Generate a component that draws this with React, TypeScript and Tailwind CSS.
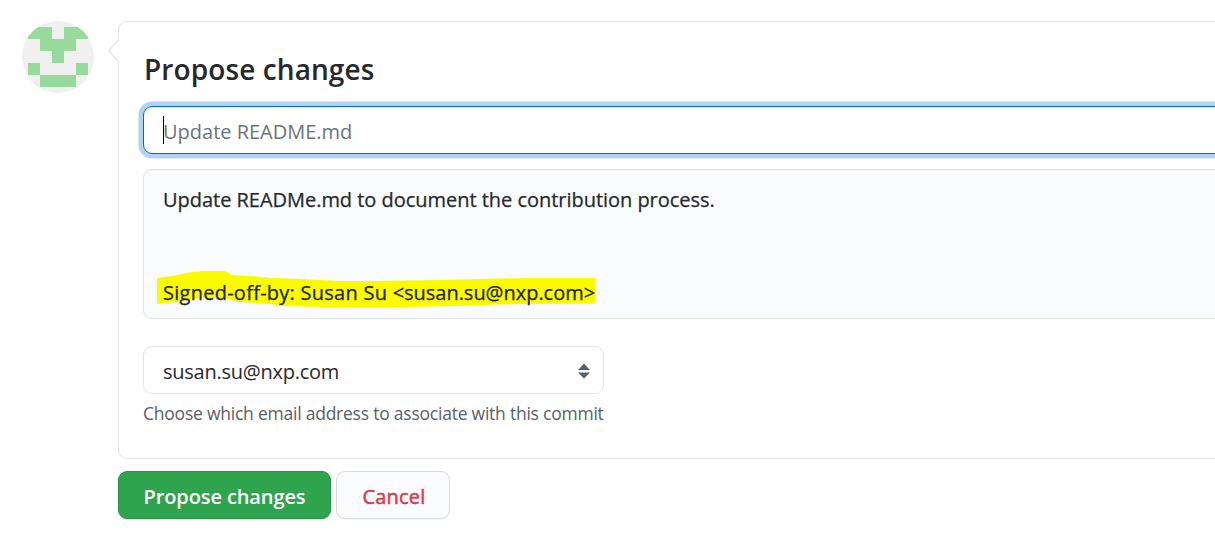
function Avatar() {
  return (
    <svg className="mt-[21px] h-[72px] w-[72px] shrink-0 rounded-full bg-[#f0f0f0]" viewBox="0 0 72 72" shapeRendering="crispEdges">
      <path
        fill="#96db9b"
        d="M6 6h24v12h12V6h24v12H54v12H42v12H30V30H18V18H6zM6 42h12v12H6zM54 42h12v12H54zM18 54h36v12H18z"
      />
    </svg>
  );
}

function Highlight() {
  return (
    <svg className="absolute left-[13px] top-[101px] h-[37px] w-[440px]" viewBox="157 271 440 37">
      <path
        fill="#fbfb00"
        d="M157 278L172 276L186 273L202 271L225 271L232 275L250 276L272 278L300 279L340 281L375 281L440 280L480 279L527 278H595V303.500H558L498 304.500L455 306L408 307H324L280 306L270 304L240 302L222 298L200 298L175 302L157 304z"
      />
    </svg>
  );
}

export default function App() {
  return (
    <div className="flex h-[548px] w-full overflow-hidden bg-white pl-[22px] font-['Open_Sans','Noto_Sans',sans-serif] text-[#24292e]">
      <Avatar />
      <main className="ml-6 mt-[21px] w-[1140px] shrink-0">
        <section className="relative h-[438px] rounded-[9px] border border-[#e1e4e8] pl-6 pt-[30px]">
          <svg className="absolute -left-[12px] top-[17px] h-[24px] w-[12px]" viewBox="0 0 12 24">
            <path d="M12 1L1.500 12L12 23z" fill="#fff" />
            <path d="M11.500 1L1.500 12L11.500 22.500" fill="none" stroke="#e1e4e8" strokeWidth="1.300" />
          </svg>
          <h1 className="h-[34px] whitespace-nowrap pl-px text-[28px] font-semibold leading-[34px] tracking-[0.1px]">Propose changes</h1>
          <div className="mt-5 flex h-12 items-center rounded-[9px] border border-[#0366d6] pl-[19px] shadow-[0_0_0_4.5px_rgba(3,102,214,0.3)]">
            <span className="h-[28px] w-px bg-black" />
            <span className="-ml-px whitespace-nowrap pt-[3px] text-[20px] leading-[30px] tracking-[-0.01px] text-[#6a737d]">Update README.md</span>
          </div>
          <div className="relative mt-[15px] h-[150px] rounded-[9px] border border-[#e1e4e8] bg-[#fafbfc] pl-[19px] pt-[14px] shadow-[inset_0_1px_0_rgba(225,228,232,0.2)]">
            <Highlight />
            <p className="relative h-[31px] whitespace-nowrap text-[20px] leading-[31px] tracking-[-0.03px] [-webkit-text-stroke:0.25px]">Update READMe.md to document the contribution process.</p>
            <p className="relative mt-[62px] h-[31px] whitespace-nowrap text-[20px] leading-[31px] tracking-[0.26px] text-[#1f2308] [-webkit-text-stroke:0.25px]">
              Signed-off-by: Susan Su <span className="tracking-[-0.03px]">&lt;susan.su@nxp.com&gt;</span>
            </p>
          </div>
          <div className="mt-[27px] flex h-12 w-[461px] items-center justify-between rounded-[9px] border border-[#e1e4e8] pl-[19px] pr-[13px]">
            <span className="whitespace-nowrap pt-[3px] text-[20px] leading-[30px] tracking-[-0.25px]">susan.su@nxp.com</span>
            <svg className="mt-px h-[16px] w-[12px]" viewBox="0 0 12 16" fill="#586069">
              <path d="M6 0.500L12 7H0zM0 9.500H12L6 15.500z" />
            </svg>
          </div>
          <p className="mt-[6px] whitespace-nowrap text-[17.5px] leading-[26px] tracking-[-0.23px] text-[#586069]">Choose which email address to associate with this commit</p>
        </section>
        <div className="mt-3 flex gap-[5px] text-[20px]">
          <button className="h-12 w-[213px] whitespace-nowrap rounded-[9px] border border-[#2a9147] bg-[#2ea44f] pt-[3px] font-semibold tracking-[-0.1px] text-white shadow-[0_1px_0_rgba(27,31,35,0.1)]">Propose changes</button>
          <button className="h-12 w-[114px] whitespace-nowrap rounded-[9px] border border-[#d8dbde] bg-[#fafbfc] pl-[2px] pt-[3px] tracking-[0.2px] text-[#d73a49] shadow-[0_1px_0_rgba(27,31,35,0.04)] [-webkit-text-stroke:0.5px]">Cancel</button>
        </div>
      </main>
    </div>
  );
}
